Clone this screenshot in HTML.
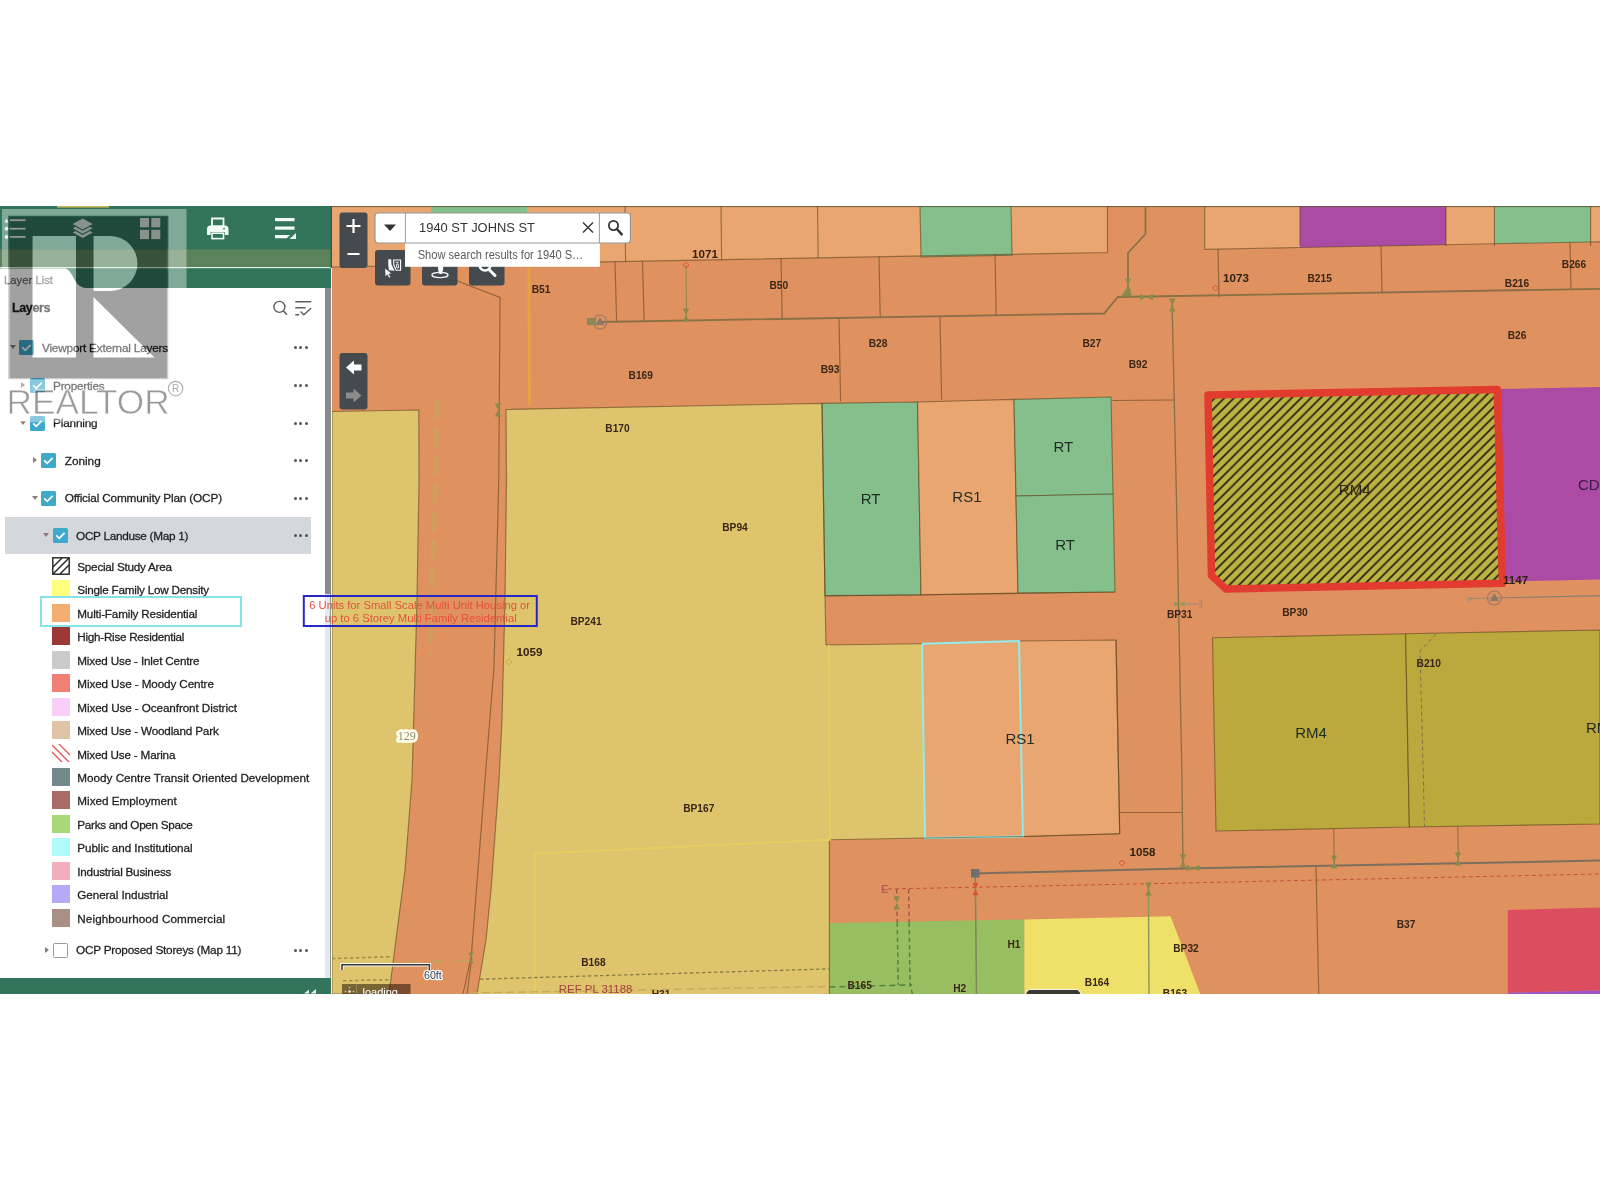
<!DOCTYPE html>
<html lang="en"><head><meta charset="utf-8"><title>Map viewer - OCP Landuse</title>
<style>
html,body{margin:0;padding:0;background:#fff}
body{width:1600px;height:1200px;position:relative;overflow:hidden;font-family:"Liberation Sans",sans-serif}
svg{display:block}
svg text{font-family:"Liberation Sans",sans-serif}
.layer{position:absolute;left:0;top:0}
.t{position:absolute;white-space:nowrap;line-height:1.15;-webkit-text-stroke:0.28px currentColor}
.cb{position:absolute;width:15px;height:15px;background:#3FA9CB;border-radius:1.5px}
.cb.off{background:#fff;border:1px solid #9a9a9a;box-sizing:border-box}
.ar{position:absolute;width:0;height:0}
.dots{position:absolute;left:293.5px;width:16px;height:4px}
.dots i{position:absolute;top:0;width:3.2px;height:3.2px;border-radius:50%;background:#555}
.dots i:nth-child(1){left:0}.dots i:nth-child(2){left:5.8px}.dots i:nth-child(3){left:11.6px}
#clip{position:absolute;left:0;top:206px;width:1600px;height:788px;overflow:hidden}
#clip>*{position:absolute;left:0;top:-206px;will-change:transform}
</style></head><body>
<div id="clip">
<svg class="layer" width="1600" height="1200" viewBox="0 0 1600 1200">
<!-- map polygons -->
<rect x="332" y="206" width="1268" height="788" fill="#DF9160"/>
<polygon points="332,206 1107.5,206 1107.5,252.498 332,267" fill="#EAA670"/>
<polygon points="431,206 527,206 527,263.353 431,265.149" fill="#85C08C"/>
<polygon points="920,206 1011,206 1012,255.284 921,256.986" fill="#85C08C" stroke="rgba(92,68,30,0.58)" stroke-width="1.15"/>
<polygon points="1204.7,206 1300,206 1300,247.5 1204.7,249.4" fill="#EAA670"/>
<polygon points="1300,206 1446,206 1446,244.7 1300,247.5" fill="#AC4BA5"/>
<polygon points="1446,206 1494.4,206 1494.4,243.8 1446,244.7" fill="#EAA670"/>
<polygon points="1494.4,206 1590.6,206 1590.6,242 1494.4,243.8" fill="#85C08C"/>
<polygon points="1590.6,206 1600,206 1600,241.8 1590.6,242" fill="#EAA670"/>
<polygon points="332,411.5 418.75,410 419,480 417,600 412,780 405,870 389,994 332,994" fill="#DFC46E" stroke="rgba(92,68,30,0.58)" stroke-width="1.15"/>
<polygon points="506,409.5 822,403.4 825,595.6 826,645 922,643.75 925,838 829.4,839.7 829.4,994 477,994 486,940 491,890 499,780 502,720 505,600 506.5,480" fill="#DFC46E"/>
<polygon points="822,403.4 917.5,402 921,595 825,595.6" fill="#85C08C" stroke="rgba(92,68,30,0.58)" stroke-width="1.15"/>
<polygon points="917.5,402 1014,399.4 1018,593 921,595" fill="#EAA670" stroke="rgba(92,68,30,0.58)" stroke-width="1.15"/>
<polygon points="1014,399.4 1111,397 1113,494 1016,496" fill="#85C08C" stroke="rgba(92,68,30,0.58)" stroke-width="1.15"/>
<polygon points="1016,496 1113,494 1115,592 1018,593" fill="#85C08C" stroke="rgba(92,68,30,0.58)" stroke-width="1.15"/>
<polygon points="1019,641 1116,640 1119.7,833.75 1023,836.5" fill="#EAA670" stroke="rgba(92,68,30,0.58)" stroke-width="1.15"/>
<polygon points="922,643.75 1019,641 1023,836.5 925,838" fill="#EAA670" stroke="#8EEDED" stroke-width="2"/>
<polygon points="829.4,923 1024.4,919.4 1024.4,994 829.4,994" fill="#98BE62"/>
<polygon points="1024.4,919.4 1170.6,916.25 1200.3,994 1024.4,994" fill="#EEE068"/>
<polygon points="1212.5,637.8 1405.6,633.75 1409.4,827 1216,831" fill="#BBA93E" stroke="rgba(92,68,30,0.58)" stroke-width="1.15"/>
<polygon points="1405.6,633.75 1600,630 1600,824 1409.4,827" fill="#BBA93E" stroke="rgba(92,68,30,0.58)" stroke-width="1.15"/>
<polygon points="1500.6,389 1600,387 1600,579.4 1505,581.5" fill="#AC4BA5"/>
<polygon points="1507.8,910 1600,907.5 1600,990.6 1507.8,992.8" fill="#DC4D60"/>
<polygon points="1507.8,992.8 1600,990.6 1600,994 1507.8,994" fill="#9A55C8"/>
<defs><pattern id="hatch" width="9.6" height="9.6" patternUnits="userSpaceOnUse"><path d="M-2.4,2.4 L2.4,-2.4 M0,9.6 L9.6,0 M7.2,12 L12,7.2" stroke="#2a1f10" stroke-width="1.7"/></pattern></defs>
<polygon points="1208,395 1497.3,389.5 1502.4,583.3 1226,589 1211.5,575.5" fill="#BAB242"/>
<text x="1354.7" y="495.3" font-size="15" font-weight="normal" fill="#2a2a1a" text-anchor="middle">RM4</text>
<polygon points="1208,395 1497.3,389.5 1502.4,583.3 1226,589 1211.5,575.5" fill="url(#hatch)" stroke="#E23B30" stroke-width="7.5" stroke-linejoin="round"/>
<!-- map lines -->
<rect x="332" y="206" width="1268" height="1.1" fill="#5f5a3c" opacity="0.85"/>
<polyline points="625,206 625.6,261.51" fill="none" stroke="rgba(92,68,30,0.58)" stroke-width="1.15"/>
<polyline points="721,206 721.6,259.714" fill="none" stroke="rgba(92,68,30,0.58)" stroke-width="1.15"/>
<polyline points="817.5,206 818.2,257.908" fill="none" stroke="rgba(92,68,30,0.58)" stroke-width="1.15"/>
<polyline points="332,267 1107.5,252.498 1107.5,206" fill="none" stroke="rgba(92,68,30,0.58)" stroke-width="1.15"/>
<polyline points="1204.7,206 1204.7,249.4 1300,247.5 1446,244.7 1494.4,243.8 1590.6,242 1600,241.8" fill="none" stroke="rgba(92,68,30,0.58)" stroke-width="1.15"/>
<polyline points="1300,206 1300,246" fill="none" stroke="rgba(92,68,30,0.58)" stroke-width="1.15"/>
<polyline points="1446,206 1446,246" fill="none" stroke="rgba(92,68,30,0.58)" stroke-width="1.15"/>
<polyline points="1494.4,206 1494.4,246" fill="none" stroke="rgba(92,68,30,0.58)" stroke-width="1.15"/>
<polyline points="1590.6,206 1590.6,246" fill="none" stroke="rgba(92,68,30,0.58)" stroke-width="1.15"/>
<polyline points="1218,249 1219,297" fill="none" stroke="rgba(92,68,30,0.58)" stroke-width="1.15"/>
<polyline points="1381,246 1382,293.5" fill="none" stroke="rgba(92,68,30,0.58)" stroke-width="1.15"/>
<polyline points="1570,242.5 1571,290" fill="none" stroke="rgba(92,68,30,0.58)" stroke-width="1.15"/>
<polyline points="781,258.604 782.2,319.104" fill="none" stroke="rgba(92,68,30,0.58)" stroke-width="1.15"/>
<polyline points="879,256.771 880.2,317.271" fill="none" stroke="rgba(92,68,30,0.58)" stroke-width="1.15"/>
<polyline points="995,254.602 996.2,315.102" fill="none" stroke="rgba(92,68,30,0.58)" stroke-width="1.15"/>
<polyline points="615,261.708 616.6,321.208" fill="none" stroke="rgba(92,68,30,0.58)" stroke-width="1.15"/>
<polyline points="642.5,261.194 644.1,320.694" fill="none" stroke="rgba(92,68,30,0.58)" stroke-width="1.15"/>
<polyline points="839,317.192 840.6,401.365" fill="none" stroke="rgba(92,68,30,0.58)" stroke-width="1.15"/>
<polyline points="940,315.98 941.6,399.85" fill="none" stroke="rgba(92,68,30,0.58)" stroke-width="1.15"/>
<polyline points="1112.5,400.5 1174,400" fill="none" stroke="rgba(92,68,30,0.58)" stroke-width="1.15"/>
<polyline points="440,272 460,282 500,297.5 498.75,480 494,667 485,780 471.3,956 463,994" fill="none" stroke="rgba(92,68,30,0.58)" stroke-width="1.15"/>
<polyline points="471.8,958 467,994" fill="none" stroke="rgba(92,68,30,0.58)" stroke-width="1.15"/>
<polyline points="506,409.5 506.5,480 505,600 502,720 499,780 491,890 486,940 477,994" fill="none" stroke="rgba(92,68,30,0.58)" stroke-width="1.15"/>
<polyline points="506,409.5 822,403.4 825,595.6 826,645" fill="none" stroke="rgba(92,68,30,0.58)" stroke-width="1.15"/>
<polyline points="825,596 1115,592" fill="none" stroke="rgba(92,68,30,0.58)" stroke-width="1.15"/>
<polyline points="826,645 922,643.75" fill="none" stroke="rgba(92,68,30,0.58)" stroke-width="1.15"/>
<polyline points="1116,640 1119.7,833.75" fill="none" stroke="rgba(92,68,30,0.58)" stroke-width="1.15"/>
<polyline points="829.4,839.7 925,838 1023,836.5 1119.7,833.75" fill="none" stroke="rgba(92,68,30,0.58)" stroke-width="1.15"/>
<polyline points="829.4,839.7 829.4,994" fill="none" stroke="rgba(92,68,30,0.58)" stroke-width="1.15"/>
<polyline points="1119.7,812.5 1181.5,812.5" fill="none" stroke="rgba(92,68,30,0.58)" stroke-width="1.15"/>
<polyline points="1316,867 1318.75,994" fill="none" stroke="rgba(92,68,30,0.58)" stroke-width="1.15"/>
<polyline points="529,262 529.5,405" fill="none" stroke="#E9A243" stroke-width="3"/>
<polyline points="437.5,400 430,655" fill="none" stroke="#CFA05C" stroke-width="4.4" stroke-dasharray="19 9" opacity="0.95"/>
<polyline points="534.7,994 534.7,853.75 830,839.7 829,645" fill="none" stroke="#E6D05A" stroke-width="2" opacity="0.85"/>
<polyline points="600,322 1104,313.5 1118,297 1600,288.8" fill="none" stroke="#8a6f47" stroke-width="1.8"/>
<polyline points="1145.5,206 1145.5,234 1128,253 1128,296" fill="none" stroke="#8a6f47" stroke-width="1.7"/>
<polyline points="1172,300 1176.5,500 1182,780 1183,866" fill="none" stroke="#8a6f47" stroke-width="1.3"/>
<polyline points="975.3,873.4 1183,868.5 1600,860.6" fill="none" stroke="#7d6f5c" stroke-width="2"/>
<polyline points="975.3,876 976.5,994" fill="none" stroke="#7d8a5c" stroke-width="1.6"/>
<polyline points="1148.4,885 1149,994" fill="none" stroke="#8a9858" stroke-width="1.4"/>
<polyline points="1333.75,829 1334.3,865" fill="none" stroke="#8a6f47" stroke-width="1"/>
<polyline points="1457.8,826 1458.4,863" fill="none" stroke="#8a6f47" stroke-width="1"/>
<polyline points="686,265.5 686.6,322" fill="none" stroke="#8d8a4c" stroke-width="1"/>
<polyline points="1494.4,598 1600,595.6" fill="none" stroke="#8a8070" stroke-width="1.2"/>
<polyline points="1470,598.5 1494,598" fill="none" stroke="#9a8a7a" stroke-width="1"/>
<polyline points="888,889 1183,883 1600,874" fill="none" stroke="#c8503c" stroke-width="1" stroke-dasharray="4 3"/>
<polyline points="1436,634 1420,651 1423.4,780 1424.5,827" fill="none" stroke="#7d744a" stroke-width="1" stroke-dasharray="4 3"/>
<polyline points="896.6,889 897.2,922.5" fill="none" stroke="#9a5a42" stroke-width="1.4" stroke-dasharray="4.5 3"/>
<polyline points="897.2,922.5 898.3,985" fill="none" stroke="#4f8740" stroke-width="1.5" stroke-dasharray="4.5 3"/>
<polyline points="908.6,889 909.2,922.5" fill="none" stroke="#9a5a42" stroke-width="1.4" stroke-dasharray="4.5 3"/>
<polyline points="909.2,922.5 910,985 912.5,994" fill="none" stroke="#4f8740" stroke-width="1.5" stroke-dasharray="4.5 3"/>
<polyline points="829.4,987 912,984.8" fill="none" stroke="#4f8740" stroke-width="1.5" stroke-dasharray="6 4"/>
<polyline points="332,958.6 392,956.6" fill="none" stroke="#a08f3e" stroke-width="1.5" stroke-dasharray="3.5 2.5"/>
<polyline points="343,980.8 390,979.6" fill="none" stroke="#a08f3e" stroke-width="1.5" stroke-dasharray="3.5 2.5"/>
<polyline points="480,979.2 829,968.9" fill="none" stroke="#8a7d42" stroke-width="1.3" stroke-dasharray="3.5 2.5"/>
<polyline points="470,993 829,986.5" fill="none" stroke="#c9aa5c" stroke-width="1.4" stroke-dasharray="8 4"/>
<polyline points="405,962 470,961" fill="none" stroke="#c9a05e" stroke-width="2.6" stroke-dasharray="13 12" opacity="0.85"/>
<path d="M494.8,403.6 l6.4,0 l-3.2,6.4 z M494.8,416.4 l6.4,0 l-3.2,-6.4 z" fill="#8a8a4a"/>
<path d="M682.8,308.6 l6.4,0 l-3.2,6.4 z M682.8,321.4 l6.4,0 l-3.2,-6.4 z" fill="#8a8a4a"/>
<path d="M1124.8,278.6 l6.4,0 l-3.2,6.4 z M1124.8,291.4 l6.4,0 l-3.2,-6.4 z" fill="#8a8a4a"/>
<path d="M1121,296.5 l4,-6 h5 l2,6 z" fill="#8a8a4a"/>
<path d="M1140.1,293.8 l0,6.4 l6.4,-3.2 z M1152.9,293.8 l0,6.4 l-6.4,-3.2 z" fill="#8a8a4a"/>
<path d="M1169.1,298.6 l6.4,0 l-3.2,6.4 z M1169.1,311.4 l6.4,0 l-3.2,-6.4 z" fill="#8a8a4a"/>
<path d="M1179.8,854.6 l6.4,0 l-3.2,6.4 z M1179.8,867.4 l6.4,0 l-3.2,-6.4 z" fill="#8a8a4a"/>
<path d="M1186.6,864.8 l0,6.4 l6.4,-3.2 z M1199.4,864.8 l0,6.4 l-6.4,-3.2 z" fill="#8a8a4a"/>
<path d="M1330.8,855.6 l6.4,0 l-3.2,6.4 z M1330.8,868.4 l6.4,0 l-3.2,-6.4 z" fill="#8a8a4a"/>
<path d="M1454.8,852.6 l6.4,0 l-3.2,6.4 z M1454.8,865.4 l6.4,0 l-3.2,-6.4 z" fill="#8a8a4a"/>
<path d="M1145.3,882.6 l6.4,0 l-3.2,6.4 z M1145.3,895.4 l6.4,0 l-3.2,-6.4 z" fill="#8a8a4a"/>
<path d="M893.5,896.4 l6.6,0 l-3.3,6.6 z M893.5,909.6 l6.6,0 l-3.3,-6.6 z" fill="#8a8a4a"/>
<path d="M972.5,883 l6,0 l-3,6 z M972.5,895 l6,0 l-3,-6 z" fill="#E2502E"/>
<path d="M1174.3,601.4 l0,5.2 l5.2,-2.6 z M1184.7,601.4 l0,5.2 l-5.2,-2.6 z" fill="#8a9a5a"/>
<path d="M468.4,952.8 l5.2,0 l-2.6,5.2 z M468.4,963.2 l5.2,0 l-2.6,-5.2 z" fill="#8a8a4a"/>
<path d="M1185,604 h16.5 m-2.5,-3 h2.5 v6 h-2.5" stroke="#9a8a7a" stroke-width="1" fill="none"/>
<rect x="971" y="869" width="8.5" height="8.5" fill="#6f6f6f"/>
<circle cx="600" cy="322" r="7" fill="none" stroke="#a07868" stroke-width="1.2"/><path d="M600,317 l4.5,8 l-9,0 z" fill="#8a7868"/>
<rect x="587" y="318" width="9" height="7" fill="#8a8a58"/>
<circle cx="1494.4" cy="598" r="7" fill="none" stroke="#a07868" stroke-width="1.2"/><path d="M1494.4,593 l4.5,8 l-9,0 z" fill="#8a7868"/>
<path d="M686,262 l3,3 l-3,3 l-3,-3 z" fill="none" stroke="#E0553C" stroke-width="1"/>
<path d="M1215.5,285 l3,3 l-3,3 l-3,-3 z" fill="none" stroke="#E0553C" stroke-width="1"/>
<path d="M1122,860 l3,3 l-3,3 l-3,-3 z" fill="none" stroke="#E0553C" stroke-width="1"/>
<path d="M509,659 l3,3 l-3,3 l-3,-3 z" fill="none" stroke="#D9A545" stroke-width="1"/>
<text x="884.7" y="893.2" font-size="11" font-weight="bold" fill="#B85C55" text-anchor="middle">E</text>
<text x="1470" y="602" font-size="8" font-weight="normal" fill="#9a8a7a" text-anchor="middle">E</text>
<!-- map labels -->
<text x="541" y="293" font-size="10.2" font-weight="bold" fill="#3a2616" text-anchor="middle">B51</text>
<text x="640.75" y="378.5" font-size="10.2" font-weight="bold" fill="#3a2616" text-anchor="middle">B169</text>
<text x="617.5" y="431.5" font-size="10.2" font-weight="bold" fill="#3a2616" text-anchor="middle">B170</text>
<text x="778.75" y="289" font-size="10.2" font-weight="bold" fill="#3a2616" text-anchor="middle">B50</text>
<text x="878" y="347.3" font-size="10.2" font-weight="bold" fill="#3a2616" text-anchor="middle">B28</text>
<text x="830" y="372.5" font-size="10.2" font-weight="bold" fill="#3a2616" text-anchor="middle">B93</text>
<text x="1091.75" y="346.5" font-size="10.2" font-weight="bold" fill="#3a2616" text-anchor="middle">B27</text>
<text x="1138" y="367.5" font-size="10.2" font-weight="bold" fill="#3a2616" text-anchor="middle">B92</text>
<text x="1319.7" y="281.5" font-size="10.2" font-weight="bold" fill="#3a2616" text-anchor="middle">B215</text>
<text x="1517" y="286.5" font-size="10.2" font-weight="bold" fill="#3a2616" text-anchor="middle">B216</text>
<text x="1574" y="267.5" font-size="10.2" font-weight="bold" fill="#3a2616" text-anchor="middle">B266</text>
<text x="1517" y="338.5" font-size="10.2" font-weight="bold" fill="#3a2616" text-anchor="middle">B26</text>
<text x="735" y="530.5" font-size="10.2" font-weight="bold" fill="#3a2616" text-anchor="middle">BP94</text>
<text x="586" y="625" font-size="10.2" font-weight="bold" fill="#3a2616" text-anchor="middle">BP241</text>
<text x="698.75" y="812" font-size="10.2" font-weight="bold" fill="#3a2616" text-anchor="middle">BP167</text>
<text x="593.4" y="965.5" font-size="10.2" font-weight="bold" fill="#3a2616" text-anchor="middle">B168</text>
<text x="1179.7" y="618" font-size="10.2" font-weight="bold" fill="#3a2616" text-anchor="middle">BP31</text>
<text x="1295" y="615.5" font-size="10.2" font-weight="bold" fill="#3a2616" text-anchor="middle">BP30</text>
<text x="1428.75" y="667.3" font-size="10.2" font-weight="bold" fill="#3a2616" text-anchor="middle">B210</text>
<text x="1406" y="928.2" font-size="10.2" font-weight="bold" fill="#3a2616" text-anchor="middle">B37</text>
<text x="1186" y="952" font-size="10.2" font-weight="bold" fill="#3a2616" text-anchor="middle">BP32</text>
<text x="1097" y="986" font-size="10.2" font-weight="bold" fill="#3a2616" text-anchor="middle">B164</text>
<text x="1175" y="996.5" font-size="10.2" font-weight="bold" fill="#3a2616" text-anchor="middle">B163</text>
<text x="859.7" y="988.8" font-size="10.2" font-weight="bold" fill="#3a2616" text-anchor="middle">B165</text>
<text x="1014" y="947.5" font-size="10.2" font-weight="bold" fill="#3a2616" text-anchor="middle">H1</text>
<text x="959.7" y="991.5" font-size="10.2" font-weight="bold" fill="#3a2616" text-anchor="middle">H2</text>
<text x="661" y="997.5" font-size="10.2" font-weight="bold" fill="#3a2616" text-anchor="middle">H31</text>
<text x="705" y="257.5" font-size="11.6" font-weight="bold" fill="#33210f" text-anchor="middle">1071</text>
<text x="1236" y="281.5" font-size="11.6" font-weight="bold" fill="#33210f" text-anchor="middle">1073</text>
<text x="529.5" y="656" font-size="11.6" font-weight="bold" fill="#33210f" text-anchor="middle">1059</text>
<text x="1142.5" y="856" font-size="11.6" font-weight="bold" fill="#33210f" text-anchor="middle">1058</text>
<text x="1515.6" y="583.5" font-size="11.6" font-weight="bold" fill="#33210f" text-anchor="middle">1147</text>
<text x="870.6" y="504" font-size="15" font-weight="normal" fill="#1f2a22" text-anchor="middle">RT</text>
<text x="966.9" y="502.3" font-size="15" font-weight="normal" fill="#1f2a22" text-anchor="middle">RS1</text>
<text x="1063.4" y="451.5" font-size="15" font-weight="normal" fill="#1f2a22" text-anchor="middle">RT</text>
<text x="1065" y="549.5" font-size="15" font-weight="normal" fill="#1f2a22" text-anchor="middle">RT</text>
<text x="1020" y="744.3" font-size="15" font-weight="normal" fill="#1f2a22" text-anchor="middle">RS1</text>
<text x="1311" y="738.3" font-size="15" font-weight="normal" fill="#1f2a22" text-anchor="middle">RM4</text>
<text x="1578" y="489.5" font-size="15" font-weight="normal" fill="#3a1a40" text-anchor="start">CD3</text>
<text x="1586" y="732.5" font-size="15" font-weight="normal" fill="#1f2a22" text-anchor="start">RM4</text>
<text x="595.6" y="992.8" font-size="11.4" font-weight="normal" fill="#A1413E" text-anchor="middle">REF PL 31188</text>
<text x="406.8" y="740.2" font-size="12" text-anchor="middle" fill="#8b8b74" stroke="#FFFFEC" stroke-width="5.5" stroke-linejoin="round" paint-order="stroke" style="font-family:'Liberation Serif',serif">129</text>
<!-- map widgets -->
<rect x="339.5" y="212.5" width="28" height="55.5" rx="3" fill="#454a4e"/>
<path d="M346.5,226 h14 M353.5,219 v14 M347.5,254 h12" stroke="#fff" stroke-width="2.2" fill="none"/>
<rect x="339.5" y="353" width="28" height="56.5" rx="3" fill="#454a4e"/>
<path d="M346,367.5 l8,-7 v4 h7.5 v6 h-7.5 v4 z" fill="#fff"/>
<path d="M361.5,395.5 l-8,-7 v4 h-7.5 v6 h7.5 v4 z" fill="#8c8c8c"/>
<rect x="375" y="250" width="35.5" height="35.5" rx="3" fill="#454a4e"/>
<rect x="422" y="250" width="35.5" height="35.5" rx="3" fill="#454a4e"/>
<rect x="469" y="250" width="35.5" height="35.5" rx="3" fill="#454a4e"/>
<path d="M388.3,259.2 H391.2 L391.5,264.6 L394.6,270.8 L388.9,270.3 L388.3,265.1 Z" fill="#fff"/><path d="M393.6,260 H400.6 V270.3 H396.2 L393.8,265 Z" fill="none" stroke="#fff" stroke-width="1.1"/><path d="M395.6,262.3 h3 M396.3,264.5 l1.8,-0.8 l0.6,4.2 h-1.8 z" fill="none" stroke="#fff" stroke-width="0.9"/><path d="M384.9,268.3 l0.4,8.4 l2.1,-2 l1.7,3.2 l1.5,-0.8 l-1.7,-3.1 l2.9,-0.4 z" fill="#fff" stroke="#454a4e" stroke-width="0.5"/>
<path d="M437.6,262 h6 l-0.6,8 l-1.2,4 h-2.4 l-1.2,-4 z" fill="#fff"/><ellipse cx="440" cy="275" rx="8" ry="2.6" fill="none" stroke="#eef7f2" stroke-width="1.4"/>
<circle cx="485" cy="265" r="5.5" fill="none" stroke="#fff" stroke-width="2.4"/><path d="M489,269.5 l6,6" stroke="#fff" stroke-width="3" stroke-linecap="round"/>
<rect x="405" y="241" width="194.9" height="25.8" fill="#fff"/>
<rect x="375" y="213" width="255.4" height="30" rx="3" fill="#fff" stroke="#979797" stroke-width="1.2"/>
<path d="M405.4,213 v30 M599.4,213 v30" stroke="#9a9a9a" stroke-width="1"/>
<path d="M384,224.5 h12 l-6,6.5 z" fill="#333"/>
<path d="M583,222.5 l10,10 M593,222.5 l-10,10" stroke="#333" stroke-width="1.4"/>
<circle cx="613.5" cy="225.5" r="4.6" fill="none" stroke="#333" stroke-width="1.8"/><path d="M616.8,229 l5,5.4" stroke="#333" stroke-width="2.4" stroke-linecap="round"/>
<text x="419.1" y="231.9" font-size="12.4" fill="#333" textLength="115.8" lengthAdjust="spacingAndGlyphs">1940 ST JOHNS ST</text>
<text x="417.7" y="258.8" font-size="12" fill="#5a5a5a" textLength="165.5" lengthAdjust="spacingAndGlyphs">Show search results for 1940 S…</text>
<path d="M342,970 v-5.3 h87.4 v5.3" fill="none" stroke="#fff" stroke-width="3.4" opacity="0.9"/><path d="M342,970 v-5.3 h87.4 v5.3" fill="none" stroke="#383838" stroke-width="1.5"/>
<text x="424" y="978.7" font-size="10.6" fill="#33445a" stroke="#fff" stroke-width="2.5" paint-order="stroke" stroke-linejoin="round">60ft</text>
<rect x="342" y="984" width="68.5" height="10.5" fill="#1a0c00" fill-opacity="0.52"/>
<rect x="356.3" y="984" width="0.8" height="10.5" fill="#fff" fill-opacity="0.25"/>
<text x="362.5" y="995.8" font-size="11" fill="#fff">loading...</text>
<circle cx="349.5" cy="991.5" r="1.3" fill="#eee"/><circle cx="349.5" cy="987.5" r="0.8" fill="#ccc"/><circle cx="345.5" cy="991.5" r="0.8" fill="#ccc"/><circle cx="353.5" cy="991.5" r="0.8" fill="#ccc"/>
<rect x="1025.5" y="989.5" width="55.5" height="12" rx="5" fill="#3a3a30" stroke="#f4f4ea" stroke-width="1.2"/>
<!-- header / panel frame -->
<rect x="0" y="206" width="332" height="82" fill="#32745C"/>
<rect x="0" y="249.5" width="332" height="18" fill="#5A825B"/>
<rect x="0" y="267" width="331" height="1.2" fill="#d8f0e0"/>
<rect x="57" y="206" width="52" height="1.6" fill="#c9b458"/>
<path d="M0,268.5 H64 C70,268.5 72,276 76,282 C79,286 82,288 88,288 H0 z" fill="#fff"/>
<g fill="#e6efe9"><rect x="10" y="219.3" width="15.5" height="1.8"/><rect x="10" y="227.8" width="15.5" height="1.8"/><rect x="10" y="236" width="15.5" height="1.8"/><path d="M4.5,222.5 l2,-4 l2,4 z"/><circle cx="6.5" cy="228.7" r="1.9"/><circle cx="6.5" cy="236.9" r="1.9"/></g>
<g fill="#d9e6df" transform="translate(-0.3,1)"><path d="M83,217.5 l10,5.5 l-10,5.5 l-10,-5.5 z"/><path d="M73,227.3 l2.8,-1.5 l7.2,4 l7.2,-4 l2.8,1.5 l-10,5.5 z"/><path d="M73,231.6 l2.8,-1.5 l7.2,4 l7.2,-4 l2.8,1.5 l-10,5.5 z"/></g>
<g fill="#d9e6df"><rect x="140" y="218" width="9" height="9.3"/><rect x="151.3" y="218" width="9" height="9.3"/><rect x="140" y="229.8" width="9" height="9.3"/><rect x="151.3" y="229.8" width="9" height="9.3"/></g>
<g><path d="M212,218.5 h11.5 v8 h-11.5 z" fill="none" stroke="#f2fbf6" stroke-width="1.8"/><path d="M207,229 q0,-3.5 3.5,-3.5 h14.5 q3.5,0 3.5,3.5 v6 h-3.6 v-3 h-14.3 v3 h-3.6 z" fill="#f2fbf6"/><rect x="212" y="233.2" width="11.5" height="5.4" fill="none" stroke="#f2fbf6" stroke-width="1.6"/><circle cx="224" cy="228.6" r="0.9" fill="#32745C"/></g>
<g fill="#f2fbf6"><rect x="275" y="218" width="19.5" height="3.2"/><rect x="275" y="226.5" width="19.5" height="3.2"/><path d="M275,235 h15 l-3.3,3.2 h-11.7 z"/><path d="M296,233 v6 h-6.5 z"/></g>
<rect x="0" y="978" width="332" height="16" fill="#32745C"/>
<path d="M309,993.5 v-4 l-5,4 z M316,993.5 v-4.6 l-5.5,4.6 z" fill="#e6f2ec"/>
<rect x="0" y="288" width="325" height="690" fill="#fff"/>
<rect x="325" y="288" width="5.2" height="306" fill="#878b8d"/>
<rect x="325" y="594" width="5.2" height="384" fill="#e3e9ee"/>
<rect x="330.2" y="288" width="0.8" height="690" fill="#6f7a78"/>
<rect x="331" y="268" width="1" height="726" fill="#f6f6f0"/>
<rect x="330.6" y="206" width="1.4" height="62" fill="#2a5c48"/>
</svg>
<div id="panel" style="width:332px;height:1200px">
<div class="t" style="left:4px;top:274.394px;font-size:11.3px;font-weight:normal;color:#6c6c6c;letter-spacing:0.002px;">Layer List</div>
<div class="t" style="left:12px;top:301.188px;font-size:12.6px;font-weight:bold;color:#1e1e1e;letter-spacing:-0.438px;">Layers</div>
<svg style="position:absolute;left:270px;top:297px" width="48" height="22" viewBox="270 297 48 22"><circle cx="279.4" cy="306.9" r="5.5" fill="none" stroke="#5e5e5e" stroke-width="1.4"/><path d="M283.4,311 l3.6,3.8" stroke="#5e5e5e" stroke-width="1.6"/><path d="M295.3,301.8 h16 M295.3,307.7 h10.3 M295.3,314.7 h3.8" stroke="#5e5e5e" stroke-width="1.4"/><path d="M300.6,311.6 l3.2,3.1 l7.3,-6.4" stroke="#5e5e5e" stroke-width="1.4" fill="none"/></svg>
<div style="position:absolute;left:4.7px;top:516.7px;width:306.6px;height:37px;background:#D4D8DC"></div>
<div class="ar" style="left:9.5px;top:345.1px;border-left:3.5px solid transparent;border-right:3.5px solid transparent;border-top:4.5px solid #8b7b78"></div>
<div class="cb" style="left:18.8px;top:340.1px"><svg width="15" height="15" viewBox="0 0 15 15"><path d="M3.2,7.4 l3,3 l5.4,-5.6" stroke="#fff" stroke-width="1.7" fill="none"/></svg></div>
<div class="t" style="left:42px;top:341.884px;font-size:11.8px;font-weight:normal;color:#1e1e1e;letter-spacing:-0.206px;">Viewport External Layers</div>
<div class="dots" style="top:346.2px"><i></i><i></i><i></i></div>
<div class="ar" style="left:21px;top:382px;border-top:3.5px solid transparent;border-bottom:3.5px solid transparent;border-left:4.5px solid #8b7b78"></div>
<div class="cb" style="left:30px;top:378px"><svg width="15" height="15" viewBox="0 0 15 15"><path d="M3.2,7.4 l3,3 l5.4,-5.6" stroke="#fff" stroke-width="1.7" fill="none"/></svg></div>
<div class="t" style="left:53px;top:379.784px;font-size:11.8px;font-weight:normal;color:#1e1e1e;letter-spacing:-0.228px;">Properties</div>
<div class="dots" style="top:384.1px"><i></i><i></i><i></i></div>
<div class="ar" style="left:19.5px;top:420.5px;border-left:3.5px solid transparent;border-right:3.5px solid transparent;border-top:4.5px solid #8b7b78"></div>
<div class="cb" style="left:30px;top:415.5px"><svg width="15" height="15" viewBox="0 0 15 15"><path d="M3.2,7.4 l3,3 l5.4,-5.6" stroke="#fff" stroke-width="1.7" fill="none"/></svg></div>
<div class="t" style="left:53px;top:417.284px;font-size:11.8px;font-weight:normal;color:#1e1e1e;letter-spacing:-0.178px;">Planning</div>
<div class="dots" style="top:421.6px"><i></i><i></i><i></i></div>
<div class="ar" style="left:33px;top:457.1px;border-top:3.5px solid transparent;border-bottom:3.5px solid transparent;border-left:4.5px solid #8b7b78"></div>
<div class="cb" style="left:41.3px;top:453.1px"><svg width="15" height="15" viewBox="0 0 15 15"><path d="M3.2,7.4 l3,3 l5.4,-5.6" stroke="#fff" stroke-width="1.7" fill="none"/></svg></div>
<div class="t" style="left:64.7px;top:454.884px;font-size:11.8px;font-weight:normal;color:#1e1e1e;letter-spacing:-0.013px;">Zoning</div>
<div class="dots" style="top:459.2px"><i></i><i></i><i></i></div>
<div class="ar" style="left:31.5px;top:495.5px;border-left:3.5px solid transparent;border-right:3.5px solid transparent;border-top:4.5px solid #8b7b78"></div>
<div class="cb" style="left:41.3px;top:490.5px"><svg width="15" height="15" viewBox="0 0 15 15"><path d="M3.2,7.4 l3,3 l5.4,-5.6" stroke="#fff" stroke-width="1.7" fill="none"/></svg></div>
<div class="t" style="left:64.7px;top:492.284px;font-size:11.8px;font-weight:normal;color:#1e1e1e;letter-spacing:-0.178px;">Official Community Plan (OCP)</div>
<div class="dots" style="top:496.6px"><i></i><i></i><i></i></div>
<div class="ar" style="left:43px;top:533px;border-left:3.5px solid transparent;border-right:3.5px solid transparent;border-top:4.5px solid #8b7b78"></div>
<div class="cb" style="left:53px;top:528px"><svg width="15" height="15" viewBox="0 0 15 15"><path d="M3.2,7.4 l3,3 l5.4,-5.6" stroke="#fff" stroke-width="1.7" fill="none"/></svg></div>
<div class="t" style="left:76px;top:529.784px;font-size:11.8px;font-weight:normal;color:#1e1e1e;letter-spacing:-0.296px;">OCP Landuse (Map 1)</div>
<div class="dots" style="top:534.1px"><i></i><i></i><i></i></div>
<div class="ar" style="left:44.5px;top:946.5px;border-top:3.5px solid transparent;border-bottom:3.5px solid transparent;border-left:4.5px solid #8b7b78"></div>
<div class="cb off" style="left:53px;top:942.5px"></div>
<div class="t" style="left:76px;top:944.284px;font-size:11.8px;font-weight:normal;color:#1e1e1e;letter-spacing:-0.232px;">OCP Proposed Storeys (Map 11)</div>
<div class="dots" style="top:948.6px"><i></i><i></i><i></i></div>
<svg style="position:absolute;left:52px;top:556.7px" width="18" height="18" viewBox="0 0 18 18"><rect x="0.8" y="0.8" width="16.4" height="16.4" fill="#fff" stroke="#222" stroke-width="1.4"/><path d="M1,10 L10,1 M1,17 L17,1 M8,17 L17,8" stroke="#222" stroke-width="1.4"/></svg>
<div class="t" style="left:77.3px;top:559.746px;font-size:11.7px;font-weight:normal;color:#1e1e1e;letter-spacing:-0.237px;">Special Study Area</div>
<div style="position:absolute;left:52px;top:580.17px;width:18px;height:18px;background:#FFFF7F"></div>
<div class="t" style="left:77.3px;top:583.216px;font-size:11.7px;font-weight:normal;color:#1e1e1e;letter-spacing:-0.215px;">Single Family Low Density</div>
<div style="position:absolute;left:52px;top:603.64px;width:18px;height:18px;background:#F3AE72"></div>
<div class="t" style="left:77.3px;top:606.686px;font-size:11.7px;font-weight:normal;color:#1e1e1e;letter-spacing:-0.169px;">Multi-Family Residential</div>
<div style="position:absolute;left:52px;top:627.11px;width:18px;height:18px;background:#9B3835"></div>
<div class="t" style="left:77.3px;top:630.156px;font-size:11.7px;font-weight:normal;color:#1e1e1e;letter-spacing:-0.266px;">High-Rise Residential</div>
<div style="position:absolute;left:52px;top:650.58px;width:18px;height:18px;background:#CBCBCB"></div>
<div class="t" style="left:77.3px;top:653.626px;font-size:11.7px;font-weight:normal;color:#1e1e1e;letter-spacing:-0.163px;">Mixed Use - Inlet Centre</div>
<div style="position:absolute;left:52px;top:674.05px;width:18px;height:18px;background:#F07F75"></div>
<div class="t" style="left:77.3px;top:677.096px;font-size:11.7px;font-weight:normal;color:#1e1e1e;letter-spacing:-0.105px;">Mixed Use - Moody Centre</div>
<div style="position:absolute;left:52px;top:697.52px;width:18px;height:18px;background:#F9CFFA"></div>
<div class="t" style="left:77.3px;top:700.566px;font-size:11.7px;font-weight:normal;color:#1e1e1e;letter-spacing:-0.093px;">Mixed Use - Oceanfront District</div>
<div style="position:absolute;left:52px;top:720.99px;width:18px;height:18px;background:#E0C3A7"></div>
<div class="t" style="left:77.3px;top:724.036px;font-size:11.7px;font-weight:normal;color:#1e1e1e;letter-spacing:-0.160px;">Mixed Use - Woodland Park</div>
<svg style="position:absolute;left:52px;top:744.46px" width="18" height="18" viewBox="0 0 18 18"><path d="M0,8 L10,18 M0,1 L17,18 M7,0 L18,11" stroke="#E8565A" stroke-width="1.4"/></svg>
<div class="t" style="left:77.3px;top:747.506px;font-size:11.7px;font-weight:normal;color:#1e1e1e;letter-spacing:-0.190px;">Mixed Use - Marina</div>
<div style="position:absolute;left:52px;top:767.93px;width:18px;height:18px;background:#73898B"></div>
<div class="t" style="left:77.3px;top:770.976px;font-size:11.7px;font-weight:normal;color:#1e1e1e;letter-spacing:0.002px;">Moody Centre Transit Oriented Development</div>
<div style="position:absolute;left:52px;top:791.4px;width:18px;height:18px;background:#A96A68"></div>
<div class="t" style="left:77.3px;top:794.446px;font-size:11.7px;font-weight:normal;color:#1e1e1e;letter-spacing:0.007px;">Mixed Employment</div>
<div style="position:absolute;left:52px;top:814.87px;width:18px;height:18px;background:#A8D877"></div>
<div class="t" style="left:77.3px;top:817.916px;font-size:11.7px;font-weight:normal;color:#1e1e1e;letter-spacing:-0.283px;">Parks and Open Space</div>
<div style="position:absolute;left:52px;top:838.34px;width:18px;height:18px;background:#B0FAFA"></div>
<div class="t" style="left:77.3px;top:841.386px;font-size:11.7px;font-weight:normal;color:#1e1e1e;letter-spacing:-0.073px;">Public and Institutional</div>
<div style="position:absolute;left:52px;top:861.81px;width:18px;height:18px;background:#F2AEBB"></div>
<div class="t" style="left:77.3px;top:864.856px;font-size:11.7px;font-weight:normal;color:#1e1e1e;letter-spacing:-0.222px;">Industrial Business</div>
<div style="position:absolute;left:52px;top:885.28px;width:18px;height:18px;background:#B7A9F8"></div>
<div class="t" style="left:77.3px;top:888.326px;font-size:11.7px;font-weight:normal;color:#1e1e1e;letter-spacing:-0.087px;">General Industrial</div>
<div style="position:absolute;left:52px;top:908.75px;width:18px;height:18px;background:#A98F86"></div>
<div class="t" style="left:77.3px;top:911.796px;font-size:11.7px;font-weight:normal;color:#1e1e1e;letter-spacing:0.103px;">Neighbourhood Commercial</div>
<div style="position:absolute;left:40.4px;top:595.7px;width:197.4px;height:26.9px;border:2px solid #85E4E6;box-sizing:content-box"></div>
</div>
<svg class="layer" width="1600" height="1200" viewBox="0 0 1600 1200" style="pointer-events:none">
<path fill-rule="evenodd" fill="#fff" fill-opacity="0.38" d="M2,209 H186.5 V422 H2 Z M8.2,215.7 H168.3 V379.3 H8.2 Z M32.5,236 V357.5 H76 V236 Z M93.5,236 V291 H110 A27.5,27.5 0 0 0 110,236 Z M93.5,297 V357.5 H154.5 Z"/>
<path fill-rule="evenodd" fill="#000" fill-opacity="0.2" d="M8.2,215.7 H168.3 V379.3 H8.2 Z M9.6,217.1 H166.9 V377.9 H9.6 Z"/>
<path fill-rule="evenodd" fill="#000" fill-opacity="0.37" d="M9.6,217.1 H166.9 V377.9 H9.6 Z M32.5,236 V357.5 H76 V236 Z M93.5,236 V291 H110 A27.5,27.5 0 0 0 110,236 Z M93.5,297 V357.5 H154.5 Z"/>
<g font-size="35.6" font-family="Liberation Sans, sans-serif" fill="#000" fill-opacity="0.4" stroke="#fff" stroke-opacity="0.8" stroke-width="0.8" paint-order="fill stroke"><text x="6.5" y="414.3" textLength="163.2" lengthAdjust="spacingAndGlyphs">REALTOR</text></g>
<g fill="none" stroke="#000" stroke-opacity="0.3" stroke-width="1.2"><circle cx="175.6" cy="388.6" r="7.2"/></g><text x="175.6" y="392.3" font-size="10" text-anchor="middle" fill="#000" fill-opacity="0.35" font-family="Liberation Sans, sans-serif">R</text>
<rect x="303.8" y="596" width="233" height="30" fill="none" stroke="#2727C8" stroke-width="2"/>
<text x="309.2" y="608.8" font-size="11" fill="#E4513E" textLength="220.8" lengthAdjust="spacingAndGlyphs">6 Units for Small Scale Multi Unit Housing or</text>
<text x="324.7" y="622" font-size="11" fill="#E4513E" textLength="192" lengthAdjust="spacingAndGlyphs">up to 6 Storey Multi Family Residential</text>
</svg>
</div>
</body></html>
